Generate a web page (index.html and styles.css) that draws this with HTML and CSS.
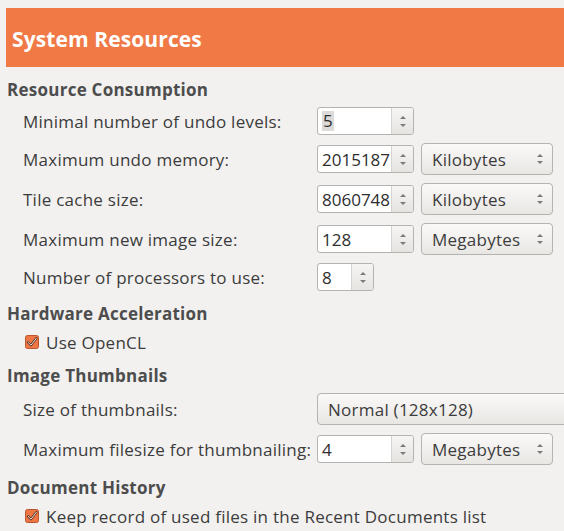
FILE: index.html
```html
<!DOCTYPE html>
<html>
<head>
<meta charset="utf-8">
<link rel="stylesheet" href="styles.css">
</head>
<body>
<div class="page">
  <div class="banner"><span class="banner-title">System Resources</span></div>

  <div class="section">
    <div class="heading">Resource Consumption</div>
    <div class="form">
      <div class="label">Minimal number of undo levels:</div>
      <div class="controls">
        <div class="spin"><div class="spin-value"><span class="sel">5</span></div><div class="spin-arrows"><span class="up"></span><span class="down"></span></div></div>
      </div>

      <div class="label">Maximum undo memory:</div>
      <div class="controls">
        <div class="spin"><div class="spin-value">2015187</div><div class="spin-arrows"><span class="up"></span><span class="down"></span></div></div>
        <div class="combo"><span class="combo-text">Kilobytes</span><span class="combo-arrows"><span class="up"></span><span class="down"></span></span></div>
      </div>

      <div class="label">Tile cache size:</div>
      <div class="controls">
        <div class="spin"><div class="spin-value">8060748</div><div class="spin-arrows"><span class="up"></span><span class="down"></span></div></div>
        <div class="combo"><span class="combo-text">Kilobytes</span><span class="combo-arrows"><span class="up"></span><span class="down"></span></span></div>
      </div>

      <div class="label">Maximum new image size:</div>
      <div class="controls">
        <div class="spin"><div class="spin-value">128</div><div class="spin-arrows"><span class="up"></span><span class="down"></span></div></div>
        <div class="combo"><span class="combo-text">Megabytes</span><span class="combo-arrows"><span class="up"></span><span class="down"></span></span></div>
      </div>

      <div class="label">Number of processors to use:</div>
      <div class="controls">
        <div class="spin spin-small"><div class="spin-value">8</div><div class="spin-arrows"><span class="up"></span><span class="down"></span></div></div>
      </div>
    </div>
  </div>

  <div class="section">
    <div class="heading">Hardware Acceleration</div>
    <div class="check-row">
      <svg class="checkbox" width="14" height="14" viewBox="0 0 14 14"><rect x="0.5" y="0.5" width="13" height="13" rx="2" fill="#ee7544" stroke="#b9552c"/><path d="M3 7.2 L6 10.2 L11.4 3.2" fill="none" stroke="#4a2d22" stroke-width="2.2" stroke-linecap="round" stroke-linejoin="round"/><path d="M3 7.2 L6 10.2 L11.4 3.2" fill="none" stroke="#f6e0d4" stroke-width="1" stroke-linecap="round" stroke-linejoin="round"/></svg>
      <span class="check-label">Use OpenCL</span>
    </div>
  </div>

  <div class="section">
    <div class="heading">Image Thumbnails</div>
    <div class="form">
      <div class="label">Size of thumbnails:</div>
      <div class="controls">
        <div class="combo combo-wide"><span class="combo-text">Normal (128x128)</span></div>
      </div>

      <div class="label">Maximum filesize for thumbnailing:</div>
      <div class="controls">
        <div class="spin"><div class="spin-value">4</div><div class="spin-arrows"><span class="up"></span><span class="down"></span></div></div>
        <div class="combo"><span class="combo-text">Megabytes</span><span class="combo-arrows"><span class="up"></span><span class="down"></span></span></div>
      </div>
    </div>
  </div>

  <div class="section">
    <div class="heading">Document History</div>
    <div class="check-row">
      <svg class="checkbox" width="14" height="14" viewBox="0 0 14 14"><rect x="0.5" y="0.5" width="13" height="13" rx="2" fill="#ee7544" stroke="#b9552c"/><path d="M3 7.2 L6 10.2 L11.4 3.2" fill="none" stroke="#4a2d22" stroke-width="2.2" stroke-linecap="round" stroke-linejoin="round"/><path d="M3 7.2 L6 10.2 L11.4 3.2" fill="none" stroke="#f6e0d4" stroke-width="1" stroke-linecap="round" stroke-linejoin="round"/></svg>
      <span class="check-label">Keep record of used files in the Recent Documents list</span>
    </div>
  </div>
</div>
</body>
</html>
```

FILE: styles.css
```css
html, body {
  margin: 0;
  padding: 0;
  background: #f2f1f0;
  overflow: hidden;
}
body {
  font-family: "Open Sans", "Noto Sans", sans-serif;
  font-size: 17px;
  letter-spacing: 0.25px;
  color: #3c3c3c;
  width: 564px;
  height: 531px;
}
.page {
  padding-top: 8px;
}
.banner {
  margin-left: 6px;
  height: 59px;
  background: #f07946;
  display: flex;
  align-items: center;
  padding-left: 6px;
}
.banner-title {
  color: #ffffff;
  font-weight: bold;
  font-size: 21px;
  letter-spacing: 0.1px;
  padding-top: 2px;
}
.section {
  margin-top: 12px;
  padding-left: 7px;
}
.heading {
  font-weight: bold;
  color: #4d4d4d;
  height: 22px;
  line-height: 22px;
  margin-bottom: 6px;
}
.form {
  display: grid;
  grid-template-columns: 294px auto;
  row-gap: 8px;
  padding-left: 16px;
  align-items: center;
}
.label {
  white-space: nowrap;
}
.controls {
  display: flex;
  align-items: center;
  gap: 7px;
}
.spin {
  display: flex;
  width: 97px;
  height: 28px;
  box-sizing: border-box;
  border: 1px solid #b5b3b0;
  border-radius: 3px;
  background: #ffffff;
  overflow: hidden;
}
.spin-small {
  width: 57px;
}
.spin-value {
  flex: 1;
  display: flex;
  align-items: center;
  padding-left: 4px;
  color: #2e2e2e;
  white-space: nowrap;
  overflow: hidden;
  letter-spacing: 0;
}
.sel {
  background: #dcdbd9;
  padding: 0 1px;
  line-height: 20px;
}
.spin-arrows {
  width: 21px;
  flex-shrink: 0;
  border-left: 1px solid #d6d4d1;
  background: linear-gradient(#f6f5f4, #e6e4e1);
  display: flex;
  flex-direction: column;
  align-items: center;
  justify-content: center;
  gap: 5px;
}
.up {
  width: 0;
  height: 0;
  border-left: 3px solid transparent;
  border-right: 3px solid transparent;
  border-bottom: 3px solid #7a7a7a;
}
.down {
  width: 0;
  height: 0;
  border-left: 3px solid transparent;
  border-right: 3px solid transparent;
  border-top: 3px solid #7a7a7a;
}
.combo {
  width: 132px;
  height: 32px;
  box-sizing: border-box;
  border: 1px solid #b5b3b0;
  border-radius: 4px;
  background: linear-gradient(#faf9f8, #e9e7e4);
  display: flex;
  align-items: center;
  padding-left: 10px;
  padding-right: 9px;
  color: #3c3c3c;
}
.combo-wide {
  width: 270px;
  flex-shrink: 0;
}
.combo-text {
  flex: 1;
  white-space: nowrap;
}
.combo-arrows {
  display: flex;
  flex-direction: column;
  align-items: center;
  gap: 4px;
}
.check-row {
  display: flex;
  align-items: center;
  height: 22px;
  padding-left: 18px;
}
.checkbox {
  flex-shrink: 0;
  margin-right: 7px;
}
.check-label {
  white-space: nowrap;
}
```
